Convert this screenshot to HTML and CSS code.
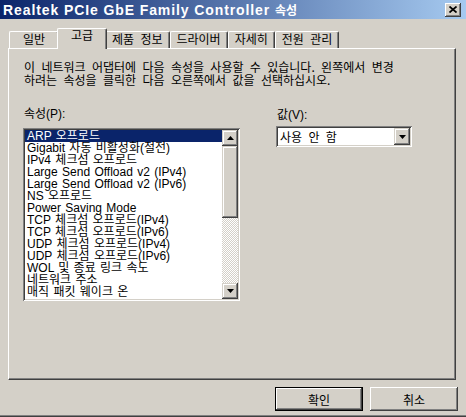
FILE: index.html
```html
<!DOCTYPE html>
<html lang="ko">
<head>
  <meta charset="UTF-8" />
  <title>Realtek PCIe GbE Family Controller 속성</title>
  <link rel="stylesheet" href="styles.css">
</head>
<body>
  <div class="window">
    <!-- Title bar -->
    <div class="titlebar">
      <span class="title">Realtek PCIe GbE Family Controller <span class="title-ko">속성</span></span>
      <button class="close-btn">
        <svg width="8" height="7" viewBox="0 0 8 7"><path d="M0.5 0.5 L7.5 6.5 M7.5 0.5 L0.5 6.5" stroke="#000" stroke-width="1.7" fill="none"/></svg>
      </button>
    </div>

    <!-- Tabs -->
    <div class="tabs">
      <div class="tab tab-wide">일반</div>
      <div class="tab active">고급</div>
      <div class="tab">제품 정보</div>
      <div class="tab">드라이버</div>
      <div class="tab">자세히</div>
      <div class="tab">전원 관리</div>
    </div>

    <div class="panel">
      <p class="desc">이 네트워크 어댑터에 다음 속성을 사용할 수 있습니다. 왼쪽에서 변경<br>하려는 속성을 클릭한 다음 오른쪽에서 값을 선택하십시오.</p>

      <div class="fields">
        <div class="field-left">
          <div class="label">속성(P):</div>
          <div class="listbox">
            <ul class="items">
              <li class="selected">ARP 오프로드</li>
              <li>Gigabit 자동 비활성화(절전)</li>
              <li>IPv4 체크섬 오프로드</li>
              <li>Large Send Offload v2 (IPv4)</li>
              <li>Large Send Offload v2 (IPv6)</li>
              <li>NS 오프로드</li>
              <li>Power Saving Mode</li>
              <li>TCP 체크섬 오프로드(IPv4)</li>
              <li>TCP 체크섬 오프로드(IPv6)</li>
              <li>UDP 체크섬 오프로드(IPv4)</li>
              <li>UDP 체크섬 오프로드(IPv6)</li>
              <li>WOL 및 종료 링크 속도</li>
              <li>네트워크 주소</li>
              <li>매직 패킷 웨이크 온</li>
            </ul>
            <div class="scrollbar">
              <div class="sb-btn">
                <svg width="7" height="4" viewBox="0 0 7 4"><path d="M3.5 0 L7 4 L0 4 Z" fill="#000"/></svg>
              </div>
              <div class="sb-thumb"></div>
              <div class="sb-track"></div>
              <div class="sb-btn">
                <svg width="7" height="4" viewBox="0 0 7 4"><path d="M0 0 L7 0 L3.5 4 Z" fill="#000"/></svg>
              </div>
            </div>
          </div>
        </div>

        <div class="field-right">
          <div class="label">값(V):</div>
          <div class="combo">
            <span class="combo-text">사용 안 함</span>
            <span class="combo-btn">
              <svg width="7" height="4" viewBox="0 0 7 4"><path d="M0 0 L7 0 L3.5 4 Z" fill="#000"/></svg>
            </span>
          </div>
        </div>
      </div>
    </div>

    <div class="buttons">
      <button class="btn default">확인</button>
      <button class="btn">취소</button>
    </div>
  </div>
</body>
</html>
```

FILE: styles.css
```css
* {
  box-sizing: border-box;
  margin: 0;
  padding: 0;
}

body {
  background: #d4d0c8;
  font-family: "Liberation Sans", "Noto Sans CJK KR", sans-serif;
  font-size: 12px;
  color: #000;
}

.window {
  width: 466px;
  height: 417px;
  background: #d4d0c8;
  border-bottom: 1px solid #404040;
  box-shadow: inset 0 -1px #808080;
  overflow: hidden;
}

/* title bar */
.titlebar {
  height: 19px;
  display: flex;
  align-items: center;
  justify-content: space-between;
  padding: 0 5px 0 3px;
  background: linear-gradient(to right, #0a246a, #a6caf0);
}

.title {
  color: #fff;
  font-weight: bold;
  font-size: 14px;
  letter-spacing: 0.9px;
  white-space: nowrap;
}

.title-ko {
  font-size: 12px;
  letter-spacing: 0;
}

.close-btn {
  width: 16px;
  height: 14px;
  border: none;
  background: #d4d0c8;
  display: flex;
  align-items: center;
  justify-content: center;
  box-shadow: inset -1px -1px #404040, inset 1px 1px #fff, inset -2px -2px #808080;
}

/* tabs */
.tabs {
  height: 29px;
  display: flex;
  align-items: flex-end;
  padding-left: 9px;
  word-spacing: 3px;
}

.tab {
  height: 17px;
  min-width: 46px;
  padding: 1px 6px 0;
  text-align: center;
  line-height: 15px;
  border-top: 1px solid #fff;
  border-left: 1px solid #fff;
  border-right: 1px solid #404040;
  border-top-left-radius: 2px;
  border-top-right-radius: 2px;
  box-shadow: inset -1px 0 #808080;
  white-space: nowrap;
}

.tab-wide {
  min-width: 50px;
}

.tab.active {
  position: relative;
  z-index: 1;
  height: 21px;
  min-width: 50px;
  margin: 0 -2px -1px;
  padding-top: 0;
  background: #d4d0c8;
}

/* tab page */
.panel {
  height: 332px;
  margin: 0 10px 0 8px;
  padding: 11px 14px 0;
  border: 1px solid;
  border-color: #fff #404040 #404040 #fff;
  box-shadow: inset -1px -1px #808080;
}

.desc {
  padding-left: 1px;
  line-height: 13px;
  word-spacing: 3px;
  font-family: "Noto Sans CJK KR", sans-serif;
}

.fields {
  display: flex;
  gap: 36px;
  margin-top: 22px;
}

.label {
  padding-left: 1px;
  line-height: 13px;
}

/* list box */
.listbox {
  width: 217px;
  height: 173px;
  margin-top: 7px;
  padding: 2px;
  display: flex;
  background: #fff;
  box-shadow: inset 1px 1px #808080, inset -1px -1px #fff, inset 2px 2px #404040, inset -2px -2px #d4d0c8;
}

.items {
  flex: 1;
  list-style: none;
  overflow: hidden;
}

.items li {
  height: 12px;
  line-height: 12px;
  padding-left: 2px;
  white-space: nowrap;
  word-spacing: 1px;
}

.items li.selected {
  background: #0a246a;
  color: #fff;
}

.scrollbar {
  width: 16px;
  display: flex;
  flex-direction: column;
}

.sb-btn {
  height: 16px;
  display: flex;
  align-items: center;
  justify-content: center;
  background: #d4d0c8;
  box-shadow: inset -1px -1px #404040, inset 1px 1px #d4d0c8, inset -2px -2px #808080, inset 2px 2px #fff;
}

.sb-thumb {
  height: 72px;
  background: #d4d0c8;
  box-shadow: inset -1px -1px #404040, inset 1px 1px #d4d0c8, inset -2px -2px #808080, inset 2px 2px #fff;
}

.sb-track {
  flex: 1;
  background: repeating-conic-gradient(#d4d0c8 0 25%, #fff 0 50%) 0 0 / 2px 2px;
}

/* value combo */
.field-right .label {
  margin-top: 1px;
}

.combo {
  width: 136px;
  height: 21px;
  margin-top: 4px;
  padding: 2px;
  display: flex;
  align-items: center;
  background: #fff;
  box-shadow: inset 1px 1px #808080, inset -1px -1px #fff, inset 2px 2px #404040, inset -2px -2px #d4d0c8;
}

.combo-text {
  flex: 1;
  padding-left: 2px;
  word-spacing: 3px;
}

.combo-btn {
  width: 16px;
  height: 17px;
  display: flex;
  align-items: center;
  justify-content: center;
  background: #d4d0c8;
  box-shadow: inset -1px -1px #404040, inset 1px 1px #d4d0c8, inset -2px -2px #808080, inset 2px 2px #fff;
}

/* dialog buttons */
.buttons {
  display: flex;
  justify-content: flex-end;
  gap: 7px;
  padding: 7px 8px 0 0;
}

.btn {
  width: 88px;
  height: 24px;
  border: none;
  background: #d4d0c8;
  font-family: "Liberation Sans", "Noto Sans CJK KR", sans-serif;
  font-size: 12px;
  color: #000;
  box-shadow: inset -1px -1px #404040, inset 1px 1px #fff, inset -2px -2px #808080;
}

.btn.default {
  box-shadow: inset 0 0 0 1px #000, inset -2px -2px #404040, inset 2px 2px #fff, inset -3px -3px #808080;
}
```
